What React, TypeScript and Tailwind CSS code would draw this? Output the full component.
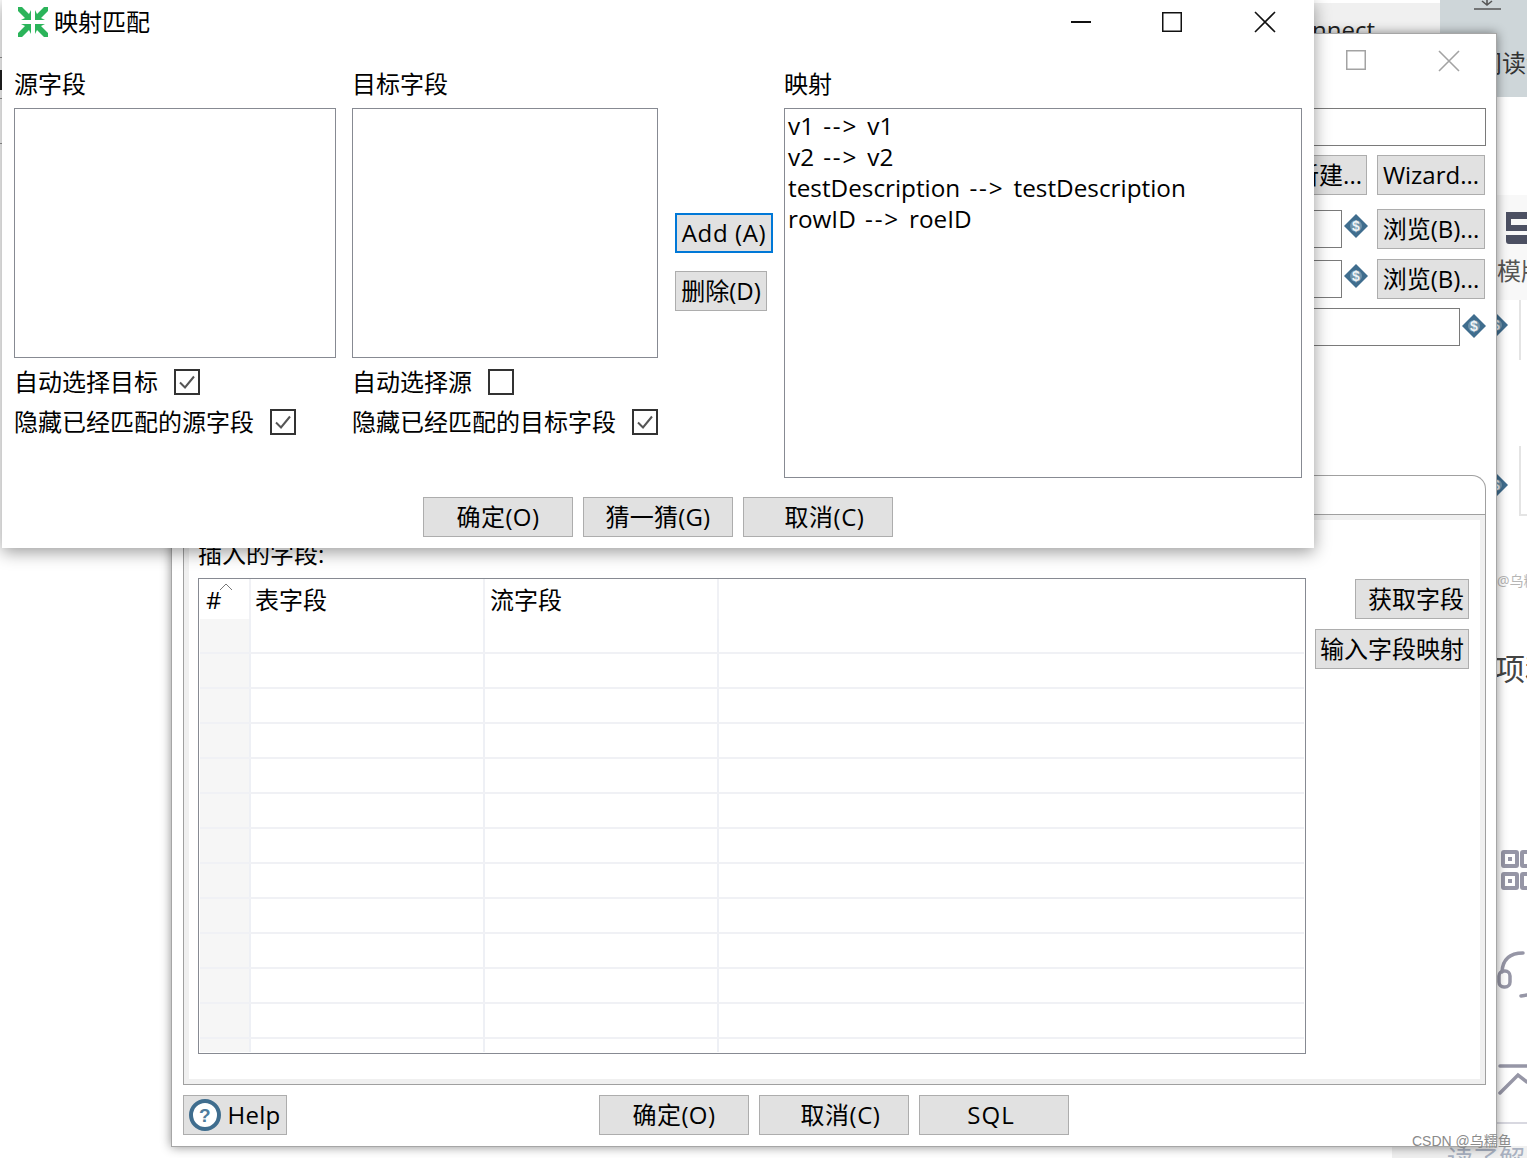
import React from "react";

const font = "font-['Open_Sans','Noto_Sans_CJK_SC',sans-serif]";

function Btn({ label, className = "" }: { label: React.ReactNode; className?: string }) {
  return (
    <div
      className={`h-10 flex items-center justify-center bg-[#e1e1e1] border border-[#adadad] text-[24px] leading-none text-black whitespace-nowrap ${className}`}
    >
      {label}
    </div>
  );
}

function Dollar({ className = "" }: { className?: string }) {
  return (
    <svg viewBox="0 0 24 24" className={`w-6 h-6 shrink-0 ${className}`}>
      <path d="M12 0 L24 12 L12 24 L0 12 Z" fill="#3f6d8e" />
      <circle cx="12" cy="12" r="6" fill="#6f93ab" />
      <text x="12" y="17" fontSize="14" fontWeight="700" textAnchor="middle" fill="#eef3f6" fontFamily="Liberation Sans">
        $
      </text>
    </svg>
  );
}

function Check({ on }: { on: boolean }) {
  return (
    <span className="w-[26px] h-[26px] border-2 border-[#333333] bg-white flex items-center justify-center shrink-0">
      {on && (
        <svg viewBox="0 0 22 22" className="w-[22px] h-[22px]">
          <path d="M4 11.5 L9 16.5 L18 5.5" fill="none" stroke="#555555" strokeWidth="2" />
        </svg>
      )}
    </span>
  );
}

function MapIcon() {
  return (
    <svg viewBox="0 0 32 32" className="w-8 h-8 shrink-0">
      <g fill="#2bb45a">
        <path d="M1 1 L5 1 L12 8 L14 4 L14 14 L4 14 L8 12 L1 5 Z" />
        <path d="M31 1 L27 1 L20 8 L18 4 L18 14 L28 14 L24 12 L31 5 Z" />
        <path d="M1 31 L5 31 L12 24 L14 28 L14 18 L4 18 L8 20 L1 27 Z" />
        <path d="M31 31 L27 31 L20 24 L18 28 L18 18 L28 18 L24 20 L31 27 Z" />
      </g>
    </svg>
  );
}

function WinButtons({ dim }: { dim?: boolean }) {
  const c = dim ? "#a3a3a3" : "#111111";
  return (
    <>
      <svg viewBox="0 0 20 20" className="w-5 h-5">
        <rect x="0.5" y="0.5" width="19" height="19" fill="none" stroke={c} strokeWidth="2" />
      </svg>
      <svg viewBox="0 0 22 22" className="w-[22px] h-[22px]">
        <path d="M1 1 L21 21 M21 1 L1 21" fill="none" stroke={c} strokeWidth="1.6" />
      </svg>
    </>
  );
}

const rows = Array.from({ length: 13 });

function FieldTable() {
  return (
    <div className="w-[1108px] h-[476px] border border-[#878a92] bg-white px-px pb-px text-[24px] leading-none">
      <div className="h-full overflow-hidden">
        <div className="grid grid-cols-[51px_234px_234px_1fr] h-10">
          <div className="relative pl-[6px] pt-[9px] border-r-2 border-[#f0f1f5]">
            #
            <svg viewBox="0 0 14 8" className="absolute left-[19px] top-[4px] w-[14px] h-2">
              <path d="M1 7 L7 1 L13 7" fill="none" stroke="#777777" strokeWidth="1" />
            </svg>
          </div>
          <div className="pl-[4px] pt-[9px] border-r-2 border-[#f0f1f5]">表字段</div>
          <div className="pl-[5px] pt-[9px] border-r-2 border-[#f0f1f5]">流字段</div>
          <div />
        </div>
        {rows.map((_, i) => (
          <div key={i} className="grid grid-cols-[51px_234px_234px_1fr] h-[35px] border-b-2 border-[#f0f1f5]">
            <div className="bg-[#f6f6f6] border-r-2 border-[#eef0f5]" />
            <div className="border-r-2 border-[#eef0f5]" />
            <div className="border-r-2 border-[#eef0f5]" />
            <div />
          </div>
        ))}
      </div>
    </div>
  );
}

function BackWindow() {
  return (
    <div className="absolute left-[171px] top-[33px] w-[1326px] h-[1114px] bg-white border border-[#a6a6a6] shadow-[0_0_10px_rgba(0,0,0,0.45)] flex flex-col pl-[11px] pr-[10px]">
      <div className="h-[40px] mt-[16px] flex items-start justify-end gap-[72px] pr-[26px]">
        <WinButtons dim />
      </div>
      <div className="h-[38px] mt-[18px] border border-[#7a7a7a]" />
      <div className="flex justify-end gap-[10px] mt-[9px] pr-px">
        <Btn label="新建..." className="w-[200px] justify-end pr-[4px]" />
        <Btn label="Wizard..." className="w-[108px]" />
      </div>
      <div className="flex items-center justify-end mt-[14px] pr-px">
        <div className="w-[400px] h-[38px] border border-[#7a7a7a]" />
        <Dollar className="ml-[2px] mr-[9px] -translate-y-[3px]" />
        <Btn label="浏览(B)..." className="w-[108px]" />
      </div>
      <div className="flex items-center justify-end mt-[10px] pr-px">
        <div className="w-[400px] h-[38px] border border-[#7a7a7a]" />
        <Dollar className="ml-[2px] mr-[9px] -translate-y-[3px]" />
        <Btn label="浏览(B)..." className="w-[108px]" />
      </div>
      <div className="flex items-center mt-[9px]">
        <div className="flex-1 h-[38px] border border-[#7a7a7a]" />
        <Dollar className="ml-[2px] -translate-y-px" />
      </div>

      <div className="mt-[129px] flex-1 flex flex-col">
        <div className="h-[40px] border-t border-r border-b border-[#a0a0a0] rounded-tr-[14px]" />
        <div className="h-[570px] border-x border-b border-[#a0a0a0] bg-white">
          <div className="h-full border-[5px] border-[#f0f0f0] pl-[9px] pr-[11px]">
            <div className="h-[58px] pt-[22px] text-[24px] leading-none">插入的字段:</div>
            <div className="flex">
              <FieldTable />
              <div className="flex-1 flex flex-col items-end gap-[10px] pt-px">
                <Btn label="获取字段" className="w-[114px] justify-end pr-[4px]" />
                <Btn label="输入字段映射" className="w-[154px]" />
              </div>
            </div>
          </div>
        </div>
        <div className="flex mt-[10px] text-black">
          <Btn
            className="w-[104px] gap-[6px] tracking-[0.3px]"
            label={
              <>
                <svg viewBox="0 0 32 32" className="w-8 h-8">
                  <circle cx="16" cy="16" r="14" fill="#ffffff" stroke="#3f6d8e" strokeWidth="4" />
                  <text x="16" y="23" fontSize="19" fontWeight="700" textAnchor="middle" fill="#4f7c9c" fontFamily="Liberation Sans">
                    ?
                  </text>
                </svg>
                Help
              </>
            }
          />
          <div className="ml-[312px] flex gap-[10px]">
            <Btn label="确定(O)" className="w-[150px] tracking-[0.4px]" />
            <Btn label="取消(C)" className="w-[150px] tracking-[0.5px] pl-[13px]" />
            <Btn label="SQL" className="w-[150px] tracking-[1px] pr-[6px]" />
          </div>
        </div>
      </div>
    </div>
  );
}

function MapWindow() {
  const maps = [
    ["v1", "v1"],
    ["v2", "v2"],
    ["testDescription", "testDescription"],
    ["rowID", "roeID"],
  ];
  return (
    <div className="absolute left-[2px] top-0 w-[1312px] h-[548px] bg-white shadow-[0_4px_16px_rgba(0,0,0,0.4)] text-black">
      <div className="h-[44px] flex items-center pl-[15px] text-[24px] leading-none">
        <MapIcon />
        <span className="ml-[5px]">映射匹配</span>
        <div className="ml-auto flex items-center pr-[38px]">
          <svg viewBox="0 0 20 20" className="w-5 h-5 mr-[71px]">
            <path d="M0 10 H20" stroke="#111111" strokeWidth="2" />
          </svg>
          <div className="flex items-center gap-[72px]">
            <WinButtons />
          </div>
        </div>
      </div>

      <div className="flex pl-[12px] pt-[24px] text-[24px] leading-none">
        <div className="w-[322px] shrink-0">
          <div className="h-10 pt-[4px]">源字段</div>
          <div className="h-[250px] border border-[#878a92]" />
          <div className="flex items-center h-[26px] mt-[11px] gap-[16px]">
            自动选择目标
            <Check on />
          </div>
          <div className="flex items-center h-[26px] mt-[14px] gap-[16px]">
            隐藏已经匹配的源字段
            <Check on />
          </div>
        </div>
        <div className="w-[306px] shrink-0 ml-[16px]">
          <div className="h-10 pt-[4px]">目标字段</div>
          <div className="h-[250px] border border-[#878a92]" />
          <div className="flex items-center h-[26px] mt-[11px] gap-[16px]">
            自动选择源
            <Check on={false} />
          </div>
          <div className="flex items-center h-[26px] mt-[14px] gap-[16px]">
            隐藏已经匹配的目标字段
            <Check on />
          </div>
        </div>
        <div className="w-[98px] shrink-0 ml-[17px] pt-[145px] flex flex-col gap-[18px]">
          <Btn label="Add (A)" className="border-2 border-[#0078d7]! tracking-[0.6px]" />
          <Btn label="删除(D)" className="w-[92px]" />
        </div>
        <div className="ml-[11px]">
          <div className="h-10 pt-[4px]">映射</div>
          <div className="w-[518px] h-[370px] border border-[#878a92] pl-[3px] pt-px leading-[31px] text-[24.3px] [word-spacing:3px]">
            {maps.map(([a, b]) => (
              <div key={a} className="whitespace-pre">
                {a} <span className="tracking-[1.7px]">--&gt;</span> {b}
              </div>
            ))}
          </div>
        </div>
      </div>

      <div className="flex justify-center gap-[10px] mt-[19px]">
        <Btn label="确定(O)" className="w-[150px] tracking-[0.4px]" />
        <Btn label="猜一猜(G)" className="w-[150px] tracking-[0.2px]" />
        <Btn label="取消(C)" className="w-[150px] tracking-[0.5px] pl-[13px]" />
      </div>
    </div>
  );
}

function Backdrop() {
  return (
    <>
      <div className="absolute left-[1300px] top-0 w-[140px] h-[40px] bg-[#f0f0f0] border-t-[3px] border-white text-[24px] leading-none pl-[12px] pt-[15px] text-[#222222]">
        nnect
      </div>
      <div className="absolute left-[1440px] top-0 w-[87px] h-[97px] bg-[#ced6d9] text-[24px] leading-none pt-[51px] pl-[38px] text-[#333333] whitespace-nowrap overflow-hidden">
        阅读演示
      </div>
      <svg viewBox="0 0 30 12" className="absolute left-[1473px] top-0 w-[30px] h-3">
        <path d="M14 0 V4 M9 1 L14 5 L19 1 M1 9 H28" fill="none" stroke="#555555" strokeWidth="1.6" />
      </svg>
      <div className="absolute left-[1497px] top-[195px] w-[30px] h-[105px] bg-[#f8f8f8]" />
      <svg viewBox="0 0 24 34" className="absolute left-[1504px] top-[211px] w-6 h-[34px]">
        <path d="M2 1 H24 V8 H7 V14 H24 V20 H2 Z M2 24 H24 V33 H5 Q2 33 2 30 Z" fill="#4c5062" />
      </svg>
      <div className="absolute left-[1497px] top-[259px] text-[24px] leading-none text-[#555555] whitespace-nowrap">
        模版
      </div>
      <div className="absolute left-[1519px] top-[300px] w-2 h-[60px] border-l-2 border-[#e4e4e4]" />
      <div className="absolute left-[1519px] top-[446px] w-2 h-[70px] border-l-2 border-b-2 border-[#e4e4e4]" />
      <Dollar className="absolute left-[1484px] top-[313px]" />
      <Dollar className="absolute left-[1484px] top-[473px]" />
      <div className="absolute left-[1497px] top-[573px] w-[30px] h-4 text-[14px] leading-4 text-[#b5b5b5] whitespace-nowrap overflow-hidden">
        @乌糯
      </div>
      <div className="absolute left-[1495px] top-[654px] text-[30px] leading-none text-[#444444] whitespace-nowrap">
        项和
      </div>
      <svg viewBox="0 0 30 42" className="absolute left-[1501px] top-[849px] w-[30px] h-[42px]">
        <g fill="none" stroke="#9696a6" strokeWidth="4">
          <rect x="2" y="3" width="14" height="14" rx="1" />
          <rect x="2" y="25" width="14" height="14" rx="1" />
          <rect x="21" y="3" width="14" height="14" rx="1" />
          <rect x="21" y="25" width="14" height="14" rx="1" />
        </g>
        <rect x="7" y="8" width="4" height="4" fill="#9696a6" />
        <rect x="7" y="30" width="4" height="4" fill="#9696a6" />
      </svg>
      <svg viewBox="0 0 30 50" className="absolute left-[1497px] top-[950px] w-[30px] h-[50px]">
        <path d="M5 22 Q6 3 26 3 M24 46 L30 45" fill="none" stroke="#9696a6" strokeWidth="3.5" strokeLinecap="round" />
        <rect x="2" y="21" width="11" height="16" rx="5" fill="none" stroke="#9696a6" strokeWidth="3.5" />
      </svg>
      <svg viewBox="0 0 30 32" className="absolute left-[1497px] top-[1063px] w-[30px] h-8">
        <path d="M3 3 H30 M3 30 L21 12 L30 19" fill="none" stroke="#9696a6" strokeWidth="3.5" strokeLinecap="round" />
      </svg>
      <div className="absolute left-[1497px] top-[1122px] w-[30px] border-t-2 border-[#d8d8e0]" />
      <div className="absolute left-[1392px] top-[1146px] w-[135px] h-3 bg-[#f0f0f0] overflow-hidden text-[26px] leading-none pl-[55px] text-[#a8b0c0] whitespace-nowrap">
        读了解
      </div>
      <div className="absolute left-0 top-[57px] w-[2px] h-[42px] border-y border-[#9a9a9a]" />
      <div className="absolute left-0 top-[70px] w-[2px] h-[20px] bg-[#222222]" />
      <div className="absolute left-0 top-[99px] w-[2px] h-[45px] border-b border-[#9a9a9a]" />
    </>
  );
}

export default function App() {
  return (
    <div className={`relative w-[1527px] h-[1158px] overflow-hidden bg-white text-black ${font}`}>
      <Backdrop />
      <BackWindow />
      <MapWindow />
      <div className="absolute left-[1412px] top-[1134px] font-['Liberation_Sans','Noto_Sans_CJK_SC',sans-serif] text-[14px] leading-none text-[#8a8a8a] whitespace-nowrap">
        CSDN @乌糯鱼
      </div>
    </div>
  );
}
